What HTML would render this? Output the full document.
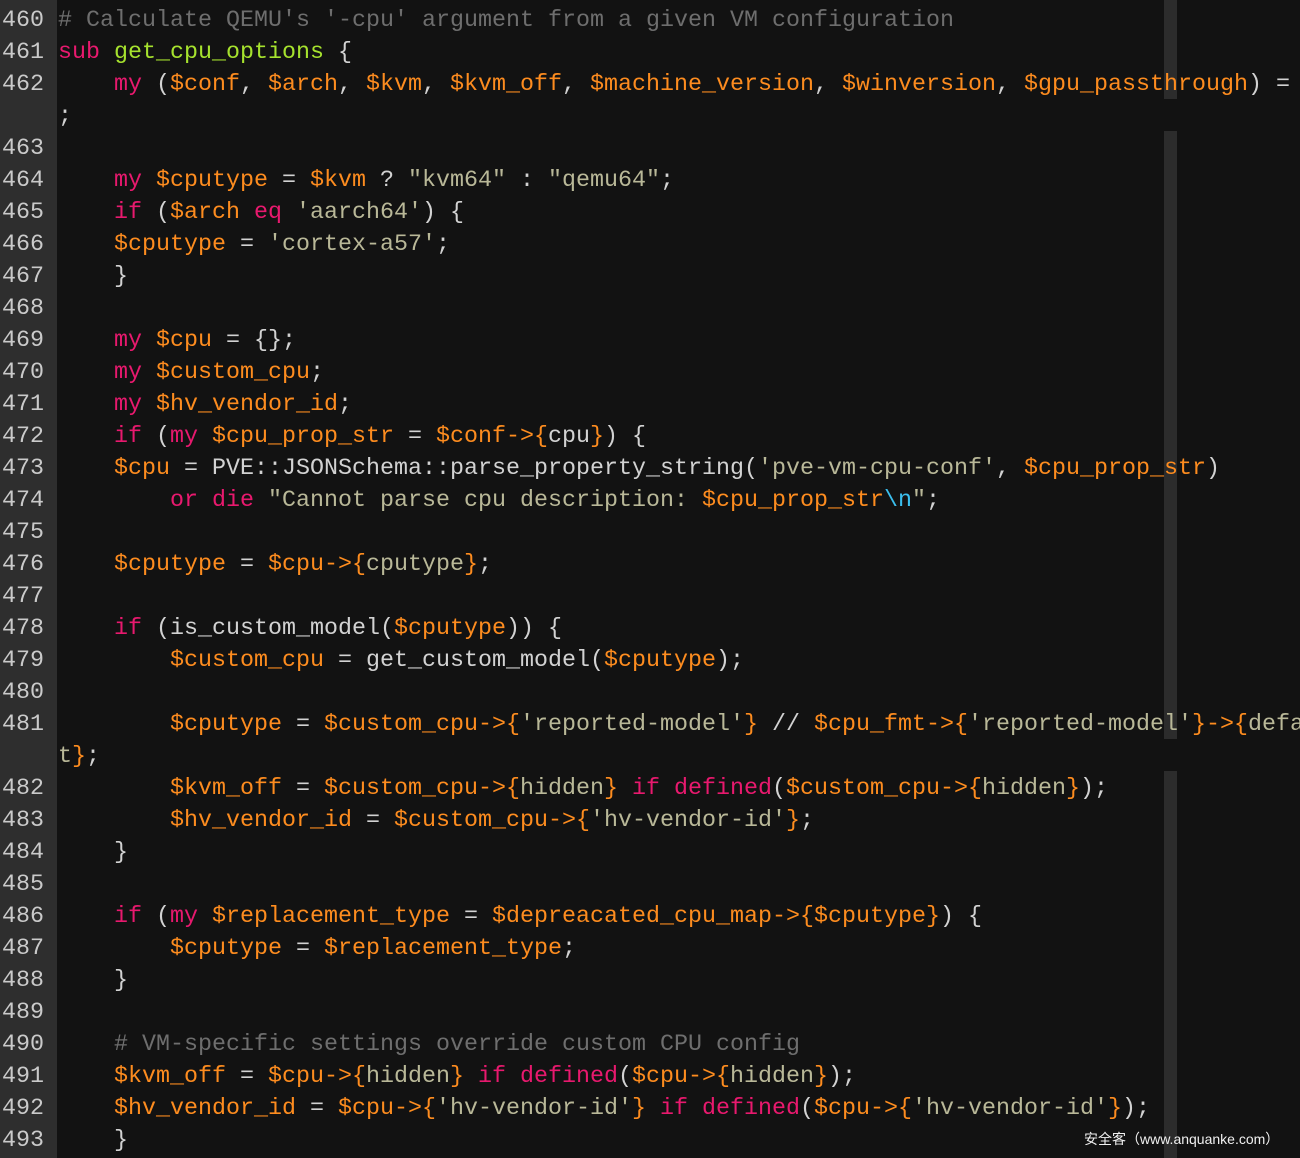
<!DOCTYPE html>
<html><head><meta charset="utf-8"><style>
html,body{margin:0;padding:0;width:1300px;height:1158px;overflow:hidden;background:#121212;}
#g{position:absolute;left:0;top:0;width:57px;height:1158px;background:#2e2e2e;}
.ruler{position:absolute;left:1164px;width:13px;background:#2c2c2c;}
#code{position:absolute;left:0;top:5px;width:1300px;font-family:"Liberation Mono",monospace;font-size:23.33px;line-height:32px;color:#d2d2d2;}
.r{height:32px;position:relative;overflow:hidden;width:1300px;}
.n{position:absolute;left:2px;top:0;color:#cacaca;}
.t{position:absolute;left:58px;top:0;white-space:pre;}
.c{color:#6e6e6e}.k{color:#e8196e}.f{color:#a6e22e}.v{color:#fd8c1f}.s{color:#b9b898}.e{color:#3bbfee}
#wm{position:absolute;left:1084px;top:1129px;font-family:"Liberation Sans","Noto Sans CJK SC",sans-serif;font-size:14px;color:#f0f0f0;white-space:nowrap;}
</style></head><body>
<div id="g"></div>
<div class="ruler" style="top:0;height:99px"></div>
<div class="ruler" style="top:131px;height:608px"></div>
<div class="ruler" style="top:771px;height:387px"></div>
<div id="code"><div class="r"><span class="n">460</span><span class="t"><span class="c"># Calculate QEMU's '-cpu' argument from a given VM configuration</span></span></div><div class="r"><span class="n">461</span><span class="t"><span class="k">sub</span> <span class="f">get_cpu_options</span> {</span></div><div class="r"><span class="n">462</span><span class="t">    <span class="k">my</span> (<span class="v">$conf</span>, <span class="v">$arch</span>, <span class="v">$kvm</span>, <span class="v">$kvm_off</span>, <span class="v">$machine_version</span>, <span class="v">$winversion</span>, <span class="v">$gpu_passthrough</span>) =</span></div><div class="r"><span class="t">;</span></div><div class="r"><span class="n">463</span></div><div class="r"><span class="n">464</span><span class="t">    <span class="k">my</span> <span class="v">$cputype</span> = <span class="v">$kvm</span> ? <span class="s">"kvm64"</span> : <span class="s">"qemu64"</span>;</span></div><div class="r"><span class="n">465</span><span class="t">    <span class="k">if</span> (<span class="v">$arch</span> <span class="k">eq</span> <span class="s">'aarch64'</span>) {</span></div><div class="r"><span class="n">466</span><span class="t">    <span class="v">$cputype</span> = <span class="s">'cortex-a57'</span>;</span></div><div class="r"><span class="n">467</span><span class="t">    }</span></div><div class="r"><span class="n">468</span></div><div class="r"><span class="n">469</span><span class="t">    <span class="k">my</span> <span class="v">$cpu</span> = {};</span></div><div class="r"><span class="n">470</span><span class="t">    <span class="k">my</span> <span class="v">$custom_cpu</span>;</span></div><div class="r"><span class="n">471</span><span class="t">    <span class="k">my</span> <span class="v">$hv_vendor_id</span>;</span></div><div class="r"><span class="n">472</span><span class="t">    <span class="k">if</span> (<span class="k">my</span> <span class="v">$cpu_prop_str</span> = <span class="v">$conf-&gt;{</span>cpu<span class="v">}</span>) {</span></div><div class="r"><span class="n">473</span><span class="t">    <span class="v">$cpu</span> = PVE::JSONSchema::parse_property_string(<span class="s">'pve-vm-cpu-conf'</span>, <span class="v">$cpu_prop_str</span>)</span></div><div class="r"><span class="n">474</span><span class="t">        <span class="k">or</span> <span class="k">die</span> <span class="s">"Cannot parse cpu description: </span><span class="v">$cpu_prop_str</span><span class="e">\n</span><span class="s">"</span>;</span></div><div class="r"><span class="n">475</span></div><div class="r"><span class="n">476</span><span class="t">    <span class="v">$cputype</span> = <span class="v">$cpu-&gt;{</span><span class="s">cputype</span><span class="v">}</span>;</span></div><div class="r"><span class="n">477</span></div><div class="r"><span class="n">478</span><span class="t">    <span class="k">if</span> (is_custom_model(<span class="v">$cputype</span>)) {</span></div><div class="r"><span class="n">479</span><span class="t">        <span class="v">$custom_cpu</span> = get_custom_model(<span class="v">$cputype</span>);</span></div><div class="r"><span class="n">480</span></div><div class="r"><span class="n">481</span><span class="t">        <span class="v">$cputype</span> = <span class="v">$custom_cpu-&gt;{</span><span class="s">'reported-model'</span><span class="v">}</span> // <span class="v">$cpu_fmt-&gt;{</span><span class="s">'reported-model'</span><span class="v">}-&gt;{</span><span class="s">defaul</span></span></div><div class="r"><span class="t"><span class="s">t</span><span class="v">}</span>;</span></div><div class="r"><span class="n">482</span><span class="t">        <span class="v">$kvm_off</span> = <span class="v">$custom_cpu-&gt;{</span><span class="s">hidden</span><span class="v">}</span> <span class="k">if</span> <span class="k">defined</span>(<span class="v">$custom_cpu-&gt;{</span><span class="s">hidden</span><span class="v">}</span>);</span></div><div class="r"><span class="n">483</span><span class="t">        <span class="v">$hv_vendor_id</span> = <span class="v">$custom_cpu-&gt;{</span><span class="s">'hv-vendor-id'</span><span class="v">}</span>;</span></div><div class="r"><span class="n">484</span><span class="t">    }</span></div><div class="r"><span class="n">485</span></div><div class="r"><span class="n">486</span><span class="t">    <span class="k">if</span> (<span class="k">my</span> <span class="v">$replacement_type</span> = <span class="v">$depreacated_cpu_map-&gt;{$cputype}</span>) {</span></div><div class="r"><span class="n">487</span><span class="t">        <span class="v">$cputype</span> = <span class="v">$replacement_type</span>;</span></div><div class="r"><span class="n">488</span><span class="t">    }</span></div><div class="r"><span class="n">489</span></div><div class="r"><span class="n">490</span><span class="t">    <span class="c"># VM-specific settings override custom CPU config</span></span></div><div class="r"><span class="n">491</span><span class="t">    <span class="v">$kvm_off</span> = <span class="v">$cpu-&gt;{</span><span class="s">hidden</span><span class="v">}</span> <span class="k">if</span> <span class="k">defined</span>(<span class="v">$cpu-&gt;{</span><span class="s">hidden</span><span class="v">}</span>);</span></div><div class="r"><span class="n">492</span><span class="t">    <span class="v">$hv_vendor_id</span> = <span class="v">$cpu-&gt;{</span><span class="s">'hv-vendor-id'</span><span class="v">}</span> <span class="k">if</span> <span class="k">defined</span>(<span class="v">$cpu-&gt;{</span><span class="s">'hv-vendor-id'</span><span class="v">}</span>);</span></div><div class="r"><span class="n">493</span><span class="t">    }</span></div></div>
<div id="wm">安全客（www.anquanke.com）</div>
</body></html>
